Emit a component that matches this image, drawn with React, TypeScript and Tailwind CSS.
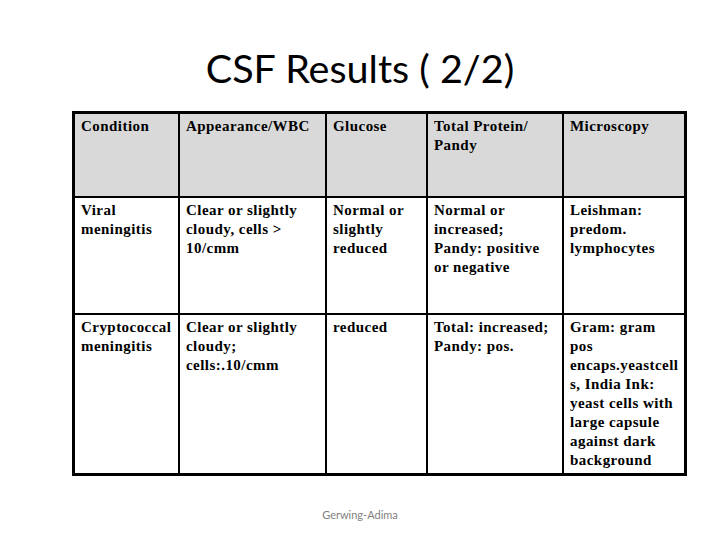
import React from "react";

const header = ["Condition", "Appearance/WBC", "Glucose", "Total Protein/\nPandy", "Microscopy"];
const rows: string[][] = [
  [
    "Viral\nmeningitis",
    "Clear or slightly\ncloudy, cells >\n10/cmm",
    "Normal or\nslightly\nreduced",
    "Normal or\nincreased;\nPandy: positive\nor negative",
    "Leishman:\npredom.\nlymphocytes",
  ],
  [
    "Cryptococcal\nmeningitis",
    "Clear or slightly\ncloudy;\ncells:.10/cmm",
    "reduced",
    "Total: increased;\nPandy: pos.",
    "Gram: gram\npos\nencaps.yeastcell\ns, India Ink:\nyeast cells with\nlarge capsule\nagainst dark\nbackground",
  ],
];

function Cell({ text, last, bottom, gray }: { text: string; last: boolean; bottom: boolean; gray?: boolean }) {
  return (
    <div
      className={`pl-[6px] pr-[2px] pt-[3px] font-['Liberation_Serif','Times_New_Roman',serif] text-[15px] leading-[19px] font-bold tracking-[0.45px] text-black whitespace-pre overflow-hidden ${
        last ? "" : "border-r-2 border-black"
      } ${bottom ? "" : "border-b-2 border-black"} ${gray ? "bg-[#d9d9d9]" : "bg-white"}`}
    >
      {text}
    </div>
  );
}

export default function App() {
  return (
    <div className="w-[720px] h-[540px] bg-white flex flex-col overflow-hidden">
      <div className="h-[111px] w-full flex justify-center pt-[44px] font-['Lato','Open_Sans',sans-serif] text-[39.5px] leading-[48px] text-black">
        CSF Results ( 2/2)
      </div>
      <div className="ml-[72px] w-[615px] border-[3px] border-black grid grid-cols-[105px_147px_101px_136px_120px] grid-rows-[84px_117px_158px]">
        {header.map((h, i) => (
          <Cell key={"h" + i} text={h} last={i === 4} bottom={false} gray />
        ))}
        {rows.map((r, ri) =>
          r.map((c, ci) => <Cell key={ri + "-" + ci} text={c} last={ci === 4} bottom={ri === rows.length - 1} />)
        )}
      </div>
      <div className="mt-[32px] self-center font-['Lato','Open_Sans',sans-serif] text-[11px] leading-[14px] text-[#7f7f7f]">
        Gerwing-Adima
      </div>
    </div>
  );
}
